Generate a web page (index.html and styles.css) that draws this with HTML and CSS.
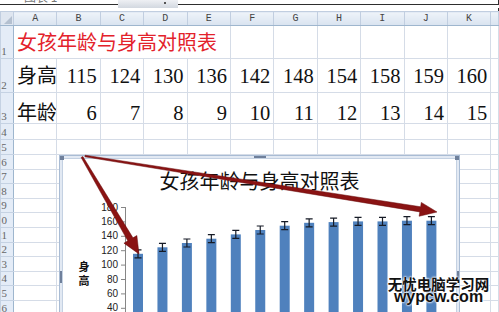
FILE: index.html
```html
<!DOCTYPE html>
<html lang="zh-CN">
<head>
    <meta charset="UTF-8">
    <meta name="viewport" content="width=device-width, initial-scale=1.0">
    <title>女孩年龄与身高对照表</title>
    <link rel="stylesheet" href="styles.css">
</head>
<body>

    <div class="topbar">
        <div class="namebox"><span>图表 1</span></div>
        <div class="dropdown"><span class="dot"></span></div>
        <div class="formula"></div>
    </div>
    <div class="gap"></div>

    <table class="sheet">
        <colgroup>
            <col class="rh">
            <col class="c"><col class="c"><col class="c"><col class="c"><col class="c"><col class="c">
            <col class="c"><col class="c"><col class="c"><col class="c"><col class="c">
            <col>
        </colgroup>
        <tr class="hdr">
            <th class="corner"><span class="tri"></span></th>
            <th>A</th><th>B</th><th>C</th><th>D</th><th>E</th><th>F</th>
            <th>G</th><th>H</th><th>I</th><th>J</th><th>K</th><th></th>
        </tr>
        <tr class="r1">
            <th class="rn">1</th>
            <td colspan="5" class="title">女孩年龄与身高对照表</td>
            <td></td><td></td><td></td><td></td><td></td><td></td><td></td>
        </tr>
        <tr class="r2">
            <th class="rn">2</th>
            <td class="label">身高</td>
            <td class="num">115</td><td class="num">124</td><td class="num">130</td><td class="num">136</td><td class="num">142</td>
            <td class="num">148</td><td class="num">154</td><td class="num">158</td><td class="num">159</td><td class="num">160</td>
            <td></td>
        </tr>
        <tr class="r3">
            <th class="rn">3</th>
            <td class="label">年龄</td>
            <td class="num">6</td><td class="num">7</td><td class="num">8</td><td class="num">9</td><td class="num">10</td>
            <td class="num">11</td><td class="num">12</td><td class="num">13</td><td class="num">14</td><td class="num">15</td>
            <td></td>
        </tr>
        <tr class="r4"><th class="rn">4</th><td></td><td></td><td></td><td></td><td></td><td></td><td></td><td></td><td></td><td></td><td></td><td></td></tr>
        <tr class="r5"><th class="rn">5</th><td></td><td></td><td></td><td></td><td></td><td></td><td></td><td></td><td></td><td></td><td></td><td></td></tr>
        <tr class="rx"><th class="rn">6</th><td></td><td></td><td></td><td></td><td></td><td></td><td></td><td></td><td></td><td></td><td></td><td></td></tr>
        <tr class="rx"><th class="rn">7</th><td></td><td></td><td></td><td></td><td></td><td></td><td></td><td></td><td></td><td></td><td></td><td></td></tr>
        <tr class="rx"><th class="rn">8</th><td></td><td></td><td></td><td></td><td></td><td></td><td></td><td></td><td></td><td></td><td></td><td></td></tr>
        <tr class="rx"><th class="rn">9</th><td></td><td></td><td></td><td></td><td></td><td></td><td></td><td></td><td></td><td></td><td></td><td></td></tr>
        <tr class="rx"><th class="rn">10</th><td></td><td></td><td></td><td></td><td></td><td></td><td></td><td></td><td></td><td></td><td></td><td></td></tr>
        <tr class="rx"><th class="rn">11</th><td></td><td></td><td></td><td></td><td></td><td></td><td></td><td></td><td></td><td></td><td></td><td></td></tr>
        <tr class="rx"><th class="rn">12</th><td></td><td></td><td></td><td></td><td></td><td></td><td></td><td></td><td></td><td></td><td></td><td></td></tr>
        <tr class="rx"><th class="rn">13</th><td></td><td></td><td></td><td></td><td></td><td></td><td></td><td></td><td></td><td></td><td></td><td></td></tr>
        <tr class="rx"><th class="rn">14</th><td></td><td></td><td></td><td></td><td></td><td></td><td></td><td></td><td></td><td></td><td></td><td></td></tr>
        <tr class="rx"><th class="rn">15</th><td></td><td></td><td></td><td></td><td></td><td></td><td></td><td></td><td></td><td></td><td></td><td></td></tr>
        <tr class="rx"><th class="rn">16</th><td></td><td></td><td></td><td></td><td></td><td></td><td></td><td></td><td></td><td></td><td></td><td></td></tr>
    </table>

    <!-- chart object floating over the sheet -->
    <div class="chart">
        <span class="handle tl"></span>
        <span class="handle tm"></span>
        <span class="handle tr"></span>
        <span class="handle ml"></span>
        <span class="handle mr"></span>
        <div class="chart-inner">
            <div class="chart-title">女孩年龄与身高对照表</div>
            <svg class="plot" width="393" height="130" viewBox="63 195 393 130">
                <g class="ylabels">
                    <text x="118" y="210.6">180</text>
                    <text x="118" y="225">160</text>
                    <text x="118" y="239.4">140</text>
                    <text x="118" y="253.8">120</text>
                    <text x="118" y="268.2">100</text>
                    <text x="118" y="282.6">80</text>
                    <text x="118" y="297">60</text>
                    <text x="118" y="311.4">40</text>
                    <text x="118" y="325.8">20</text>
                </g>
                <path class="axis" d="M125.5 207V337 M121 207.5H125 M121 221.9H125 M121 236.3H125 M121 250.7H125 M121 265.1H125 M121 279.5H125 M121 293.9H125 M121 308.3H125 M121 322.7H125"/>
                <text class="ytitle" x="84" y="271">身</text>
                <text class="ytitle" x="84" y="285">高</text>
                <g class="bars">
                    <rect x="133" y="253.8" width="10" height="90"/>
                    <rect x="157.45" y="247.3" width="10" height="90"/>
                    <rect x="181.9" y="243" width="10" height="90"/>
                    <rect x="206.35" y="238.7" width="10" height="90"/>
                    <rect x="230.8" y="234.4" width="10" height="100"/>
                    <rect x="255.25" y="230" width="10" height="100"/>
                    <rect x="279.7" y="225.7" width="10" height="110"/>
                    <rect x="304.15" y="222.8" width="10" height="110"/>
                    <rect x="328.6" y="222.1" width="10" height="110"/>
                    <rect x="353.05" y="221.4" width="10" height="110"/>
                    <rect x="377.5" y="221.4" width="10" height="110"/>
                    <rect x="401.95" y="220.7" width="10" height="110"/>
                    <rect x="426.4" y="220.7" width="10" height="110"/>
                </g>
                <path class="errbars" d="
                    M134.5 249.8H141.5M138 249.8V257.8M134.5 257.8H141.5
                    M158.95 243.3H165.95M162.45 243.3V251.3M158.95 251.3H165.95
                    M183.4 239H190.4M186.9 239V247M183.4 247H190.4
                    M207.85 234.7H214.85M211.35 234.7V242.7M207.85 242.7H214.85
                    M232.3 230.4H239.3M235.8 230.4V238.4M232.3 238.4H239.3
                    M256.75 226H263.75M260.25 226V234M256.75 234H263.75
                    M281.2 221.7H288.2M284.7 221.7V229.7M281.2 229.7H288.2
                    M305.65 218.8H312.65M309.15 218.8V226.8M305.65 226.8H312.65
                    M330.1 218.1H337.1M333.6 218.1V226.1M330.1 226.1H337.1
                    M354.55 217.4H361.55M358.05 217.4V225.4M354.55 225.4H361.55
                    M379 217.4H386M382.5 217.4V225.4M379 225.4H386
                    M403.45 216.7H410.45M406.95 216.7V224.7M403.45 224.7H410.45
                    M427.9 216.7H434.9M431.4 216.7V224.7M427.9 224.7H434.9"/>
            </svg>
        </div>
    </div>

    <!-- annotation arrows drawn on top -->
    <svg class="arrows" width="499" height="312" viewBox="0 0 499 312">
        <polygon points="82.86,156.49 132.98,237.82 136.86,235.54 139,254 123.92,243.14 127.8,240.86 81.14,157.51"/>
        <polygon points="85.13,155.21 420.62,206.76 421.31,202.42 437,212 419.11,216.24 419.8,211.9 84.87,156.79"/>
    </svg>

    <div class="watermark">
        <div class="wm-cn">无忧电脑学习网</div>
        <div class="wm-en">wypcw.com</div>
    </div>

</body>
</html>
```

FILE: styles.css
```css
body {
    margin: 0;
    width: 499px;
    height: 312px;
    overflow: hidden;
    position: relative;
    background: #fff;
    font-family: "Liberation Sans", "Noto Sans CJK SC", sans-serif;
}

/* name box / formula strip (mostly scrolled off) */
.topbar {
    display: flex;
    align-items: flex-start;
    height: 8px;
}
.namebox, .formula {
    height: 4px;
    border-bottom: 1px solid #2e2e2e;
    overflow: hidden;
}
.namebox {
    width: 118px;
}
.namebox span {
    display: block;
    margin: -9px 0 0 24px;
    font: 12px/12px "Noto Sans CJK SC", sans-serif;
    color: #777;
}
.dropdown {
    width: 60px;
    height: 8px;
    background: linear-gradient(#eef0f4, #d2d8e0);
    display: flex;
    justify-content: flex-end;
    padding-right: 12px;
    box-sizing: border-box;
}
.dot {
    width: 2px;
    height: 2px;
    margin-top: 2px;
    background: #555;
}
.formula {
    flex: 1;
    border-right: 1px solid #2e2e2e;
}
.gap {
    height: 3px;
    border-right: 1px solid #2e2e2e;
}

/* worksheet */
.sheet {
    border-collapse: collapse;
    table-layout: fixed;
    width: 499px;
}
.sheet col.rh {
    width: 13px;
}
.sheet col.c {
    width: 43.4px;
}
.sheet td {
    border: 1px solid #d5dce7;
    padding: 0 3px;
    white-space: nowrap;
    overflow: hidden;
}
.hdr {
    height: 14px;
}
.hdr th {
    background: linear-gradient(#eef3f9, #d9e3f0);
    border: 1px solid #c1cee0;
    border-bottom-color: #9eb6ce;
    font: 10px/12px "Liberation Mono", monospace;
    font-weight: normal;
    color: #444;
    padding: 0;
}
.hdr th.corner {
    background: #dfe6f0;
    position: relative;
}
.tri {
    position: absolute;
    right: 1px;
    bottom: 1px;
    border-left: 8px solid transparent;
    border-bottom: 8px solid #b4c0d0;
}
.r1 { height: 33px; }
.r2 { height: 34px; }
.r3 { height: 31px; }
.r4 { height: 16px; }
.r5 { height: 15px; }
.rx { height: 14.6px; }

th.rn {
    background: #e4ecf7;
    border: 1px solid #c5d2e3;
    border-right-color: #9eb6ce;
    font: 11px/11px "Liberation Serif", serif;
    font-weight: normal;
    color: #666;
    padding: 0 6px 1px 0;
    vertical-align: bottom;
    direction: rtl;
    white-space: nowrap;
    overflow: hidden;
}

.title {
    font: 20px/24px "Noto Sans CJK SC", sans-serif;
    color: #e3222b;
    padding-left: 4px;
    vertical-align: middle;
}
.label {
    font: 20px/22px "Noto Sans CJK SC", sans-serif;
    color: #111;
    padding-left: 4px;
    vertical-align: bottom;
    padding-bottom: 4px;
}
.num {
    font: 20.5px/20px "Liberation Serif", serif;
    color: #111;
    text-align: right;
    vertical-align: bottom;
    padding-bottom: 4px;
}
.r2 .num, .r2 .label {
    padding-bottom: 6px;
}

/* chart */
.chart {
    position: absolute;
    left: 59px;
    top: 155px;
    width: 401px;
    height: 244px;
    box-sizing: border-box;
    border: 1px solid #a9bcd4;
    background: #e2e9f3;
    padding: 2px;
}
.chart-inner {
    height: 100%;
    box-sizing: border-box;
    border: 1px solid #c4d1e2;
    background: #fff;
    overflow: hidden;
}
.chart-title {
    height: 36px;
    box-sizing: border-box;
    padding-top: 8px;
    font: 20px/28px "Noto Sans CJK SC", sans-serif;
    color: #111;
    text-align: center;
}
.plot {
    display: block;
}
.ylabels text {
    font: 10px "Liberation Sans", sans-serif;
    fill: #222;
    text-anchor: end;
}
.axis {
    stroke: #868686;
    stroke-width: 1;
    fill: none;
}
.ytitle {
    font: bold 11px "Noto Sans CJK SC", sans-serif;
    fill: #111;
    text-anchor: middle;
}
.bars rect {
    fill: #4f81bd;
}
.errbars {
    stroke: #161b26;
    stroke-width: 1.2;
    fill: none;
}
.handle {
    position: absolute;
    background: radial-gradient(circle, #6f809b 0.8px, transparent 1.1px) 0 0 / 2px 2px;
}
.handle.tl { left: 0; top: 0; width: 4px; height: 4px; }
.handle.tr { right: 0; top: 0; width: 4px; height: 4px; }
.handle.tm { left: 50%; top: 0; width: 12px; height: 2px; margin-left: -6px; }
.handle.ml { left: 0; top: 50%; width: 2px; height: 12px; margin-top: -6px; }
.handle.mr { right: 0; top: 50%; width: 2px; height: 12px; margin-top: -6px; }

.arrows {
    position: absolute;
    left: 0;
    top: 0;
    pointer-events: none;
}
.arrows polygon {
    fill: #8a1313;
    stroke: #680a0a;
    stroke-width: 0.5;
    stroke-linejoin: round;
}

.watermark {
    position: absolute;
    left: 383px;
    top: 276px;
    width: 111px;
    text-align: center;
    font-weight: bold;
    color: #111;
    text-shadow: 0 0 2px #fff, 0 0 2px #fff, 0 0 3px #fff;
}
.wm-cn {
    font: bold 14.5px/15px "Noto Sans CJK SC", sans-serif;
}
.wm-en {
    font: bold 16px/12px "Liberation Sans", sans-serif;
}
```
